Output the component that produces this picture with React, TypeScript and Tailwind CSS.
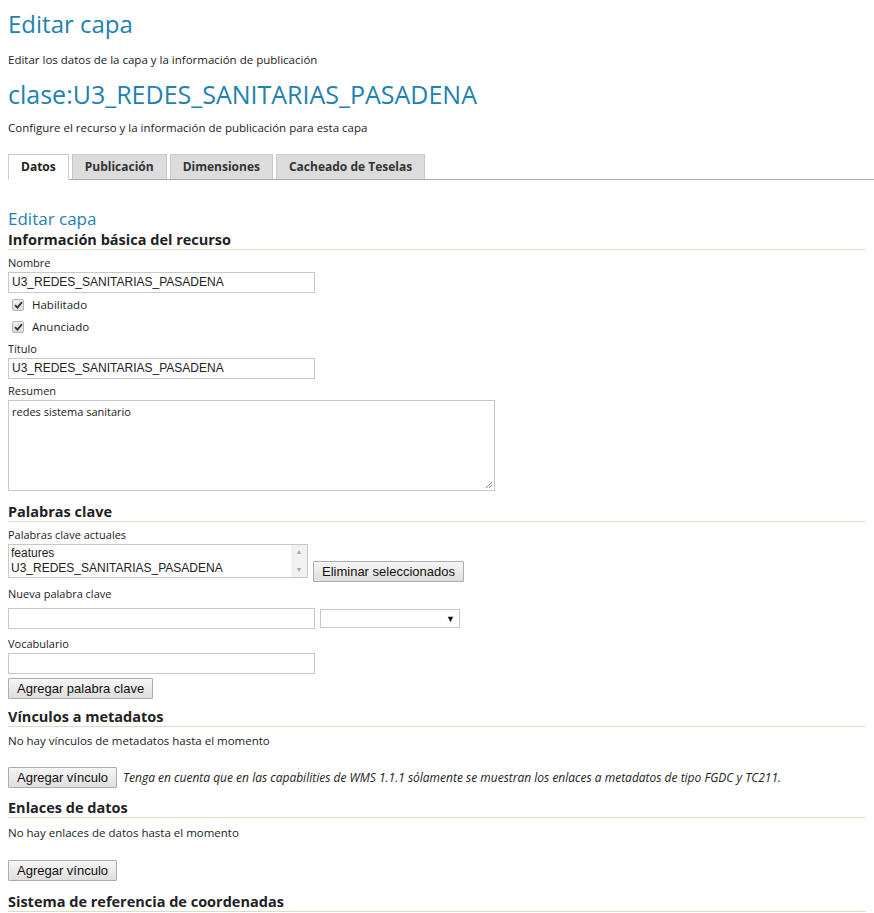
import React from "react";

const body = "font-['Open_Sans',sans-serif]";
const arial = "font-['Liberation_Sans',Arial,sans-serif]";

function Heading({ children }: { children: React.ReactNode }) {
  return (
    <h3 className="text-[14.5px] font-bold leading-[18px] text-[#222] border-b border-[#d4e0bf]">
      {children}
    </h3>
  );
}

function Label({ children }: { children: React.ReactNode }) {
  return <div className="text-[11px] leading-[14px] text-[#222]">{children}</div>;
}

function TextBox({ value = "", w = "w-[307px]" }: { value?: string; w?: string }) {
  return (
    <div
      className={`${w} h-[21px] border border-[#c8c8c8] bg-white px-[3px] ${arial} text-[12px] leading-[19px] text-[#222]`}
    >
      {value}
    </div>
  );
}

function Button({ children }: { children: React.ReactNode }) {
  return (
    <button
      className={`h-[21px] px-[8px] border border-[#adadad] rounded-[1px] bg-gradient-to-b from-[#f6f6f6] to-[#dedede] ${arial} text-[13px] leading-[19px] text-[#111]`}
    >
      {children}
    </button>
  );
}

function Check({ label }: { label: string }) {
  return (
    <div className="flex items-center gap-[8px] pl-[4px] h-[22px]">
      <span className="w-[12px] h-[12px] border border-[#b5b5b5] rounded-[2px] bg-gradient-to-b from-[#f0f0f0] to-[#dcdcdc] flex items-center justify-center">
        <svg width="9" height="8" viewBox="0 0 9 8">
          <path d="M1 4.2 L3.4 6.6 L8 1.2" stroke="#333" strokeWidth="1.8" fill="none" />
        </svg>
      </span>
      <span className="text-[11.5px] text-[#222]">{label}</span>
    </div>
  );
}

export default function App() {
  const tabs = ["Datos", "Publicación", "Dimensiones", "Cacheado de Teselas"];
  return (
    <div className={`${body} bg-white w-[874px] h-[913px] overflow-hidden px-[8px] text-[#222]`}>
      <h1 className="text-[24px] leading-[30px] pt-[9px] text-[#2281b3]">Editar capa</h1>
      <p className="text-[11.5px] leading-[14px] mt-[14px]">
        Editar los datos de la capa y la información de publicación
      </p>
      <h2 className="text-[25px] leading-[30px] mt-[12px] text-[#2281b3]">
        clase:U3_REDES_SANITARIAS_PASADENA
      </h2>
      <p className="text-[11.5px] leading-[14px] mt-[12px]">
        Configure el recurso y la información de publicación para esta capa
      </p>

      <div className="flex gap-[3px] items-end mt-[19px] border-b border-[#aaa] -mr-[8px] h-[26px]">
        {tabs.map((t, i) => (
          <div
            key={t}
            className={
              i === 0
                ? "h-[26px] px-[12px] border border-[#ccc] border-b-white bg-white text-[12px] font-bold leading-[24px] -mb-[1px]"
                : "h-[25px] px-[12px] border border-[#c8c8c8] border-b-0 bg-[#dcdcdc] text-[12px] font-bold leading-[24px] text-[#333]"
            }
          >
            {t}
          </div>
        ))}
      </div>

      <h2 className="text-[17px] leading-[22px] mt-[28px] mb-[1px] text-[#2281b3]">Editar capa</h2>
      <Heading>Información básica del recurso</Heading>

      <div className="mt-[6px]">
        <Label>Nombre</Label>
        <div className="mt-[2px]">
          <TextBox value="U3_REDES_SANITARIAS_PASADENA" />
        </div>
        <div className="mt-[1px]">
          <Check label="Habilitado" />
          <Check label="Anunciado" />
        </div>
        <div className="mt-[4px]">
          <Label>Título</Label>
        </div>
        <div className="mt-[2px]">
          <TextBox value="U3_REDES_SANITARIAS_PASADENA" />
        </div>
        <div className="mt-[5px]">
          <Label>Resumen</Label>
        </div>
        <div className="relative mt-[2px] w-[487px] h-[91px] border border-[#c8c8c8] px-[3px] pt-[3px] text-[11px] leading-[16px]">
          redes sistema sanitario
          <svg className="absolute right-[1px] bottom-[1px]" width="8" height="8" viewBox="0 0 8 8">
            <path d="M7 1 L1 7 M7 4 L4 7" stroke="#888" strokeWidth="1" />
          </svg>
        </div>
      </div>

      <div className="mt-[12px]">
        <Heading>Palabras clave</Heading>
      </div>
      <div className="mt-[6px]">
        <Label>Palabras clave actuales</Label>
        <div className="flex items-end gap-[5px] mt-[2px]">
          <div className={`w-[300px] h-[34px] border border-[#c8c8c8] flex ${arial} text-[12px] leading-[15px]`}>
            <div className="flex-1 px-[2px] pt-[1px]">
              <div>features</div>
              <div>U3_REDES_SANITARIAS_PASADENA</div>
            </div>
            <div className="w-[16px] bg-[#f1f1f1] flex flex-col items-center justify-between py-[3px] text-[#a8a8a8] text-[7px] leading-[8px]">
              <span>▲</span>
              <span>▼</span>
            </div>
          </div>
          <div className="flex -mb-[4px]">
            <Button>Eliminar seleccionados</Button>
          </div>
        </div>
        <div className="mt-[9px]">
          <Label>Nueva palabra clave</Label>
        </div>
        <div className="flex items-center gap-[5px] mt-[7px]">
          <TextBox />
          <div className="w-[140px] h-[19px] border border-[#c8c8c8] flex items-center justify-end pr-[4px] text-[9px] text-[#111]">
            ▼
          </div>
        </div>
        <div className="mt-[8px]">
          <Label>Vocabulario</Label>
        </div>
        <div className="mt-[2px]">
          <TextBox />
        </div>
        <div className="flex mt-[4px]">
          <Button>Agregar palabra clave</Button>
        </div>
      </div>

      <div className="mt-[9px]">
        <Heading>Vínculos a metadatos</Heading>
      </div>
      <p className="text-[11.5px] leading-[14px] mt-[7px]">No hay vínculos de metadatos hasta el momento</p>
      <div className="flex items-center gap-[6px] mt-[19px]">
        <Button>Agregar vínculo</Button>
        <span className="text-[12px] italic">
          Tenga en cuenta que en las capabilities de WMS 1.1.1 sólamente se muestran los enlaces a metadatos de tipo FGDC y TC211.
        </span>
      </div>

      <div className="mt-[11px]">
        <Heading>Enlaces de datos</Heading>
      </div>
      <p className="text-[11.5px] leading-[14px] mt-[8px]">No hay enlaces de datos hasta el momento</p>
      <div className="flex mt-[20px]">
        <Button>Agregar vínculo</Button>
      </div>

      <div className="mt-[12px]">
        <Heading>Sistema de referencia de coordenadas</Heading>
      </div>
    </div>
  );
}
